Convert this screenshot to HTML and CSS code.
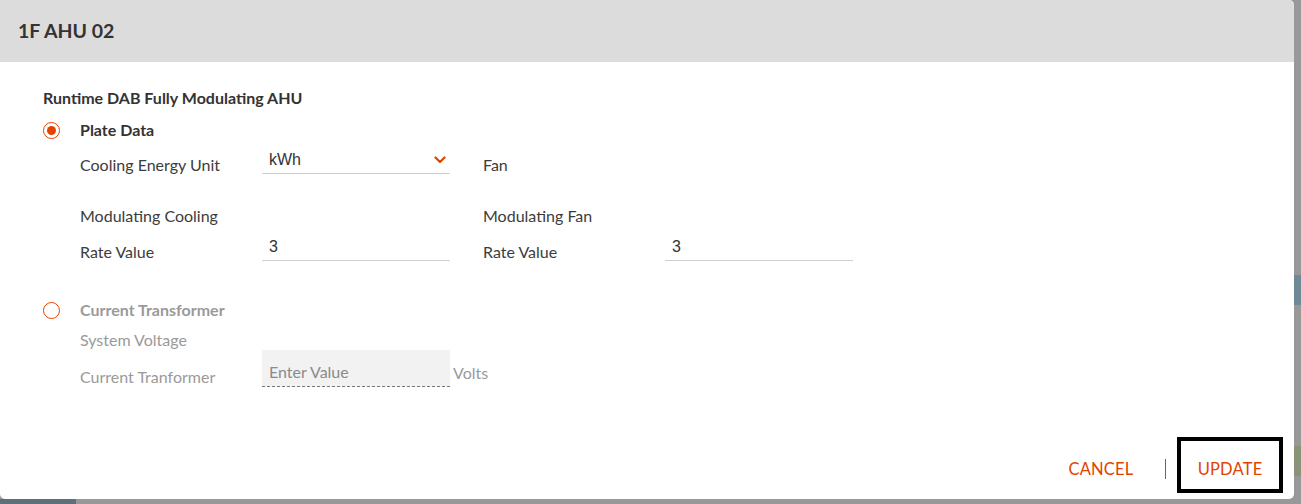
FILE: index.html
```html
<!DOCTYPE html>
<html>
<head>
<meta charset="utf-8">
<link rel="stylesheet" href="styles.css">
</head>
<body>
<div class="dialog">
  <div class="dialog-header">1F AHU 02</div>
  <div class="dialog-body">
    <div class="section-title">Runtime DAB Fully Modulating AHU</div>

    <div class="radio-row">
      <span class="radio checked"></span>
      <span class="radio-label">Plate Data</span>
    </div>

    <div class="fields">
      <div class="field-row first">
        <div class="label">Cooling Energy Unit</div>
        <div class="field select">
          <span class="value">kWh</span>
          <svg class="chevron" width="12" height="8" viewBox="0 0 12 8"><path d="M1.5 1.5 L6 6 L10.5 1.5" fill="none" stroke="#e24301" stroke-width="2.2" stroke-linecap="round" stroke-linejoin="round"/></svg>
        </div>
        <div class="label right">Fan</div>
      </div>
      <div class="field-row gap">
        <div class="label">Modulating Cooling</div>
        <div class="field empty"></div>
        <div class="label right">Modulating Fan</div>
      </div>
      <div class="field-row">
        <div class="label">Rate Value</div>
        <div class="field"><span class="value">3</span></div>
        <div class="label right">Rate Value</div>
        <div class="field"><span class="value">3</span></div>
      </div>
    </div>

    <div class="radio-row second">
      <span class="radio"></span>
      <span class="radio-label muted">Current Transformer</span>
    </div>

    <div class="ct">
      <div class="ct-row voltage">
        <div class="label muted">System Voltage</div>
      </div>
      <div class="ct-row transformer">
        <div class="label muted">Current Tranformer</div>
        <div class="disabled-input">Enter Value</div>
        <div class="unit">Volts</div>
      </div>
    </div>
  </div>
  <div class="dialog-footer">
    <button class="btn cancel">CANCEL</button>
    <span class="sep"></span>
    <button class="btn update">UPDATE</button>
  </div>
</div>
</body>
</html>
```

FILE: styles.css
```css
html, body {
  margin: 0;
  padding: 0;
}
body {
  width: 1301px;
  height: 504px;
  overflow: hidden;
  font-family: Lato, "Open Sans", sans-serif;
  background:
    linear-gradient(#5d6f7a, #5d6f7a) 0 499px / 76px 5px no-repeat,
    linear-gradient(#6f8a96, #6f8a96) 1294px 275px / 7px 30px no-repeat,
    linear-gradient(#8a9478, #8a9478) 1294px 446px / 7px 30px no-repeat,
    #989898;
}
.dialog {
  width: 1294px;
  height: 499px;
  background: #fff;
  border-radius: 0 5px 5px 5px;
  display: flex;
  flex-direction: column;
  overflow: hidden;
}
.dialog-header {
  height: 62px;
  flex: none;
  background: #dcdcdc;
  padding-left: 18px;
  line-height: 62px;
  font-size: 19.5px;
  font-weight: 700;
  color: #333;
}
.dialog-body {
  padding: 26px 0 0 43px;
  flex: 1;
}
.section-title {
  font-size: 16px;
  font-weight: 700;
  line-height: 20px;
  color: #333;
}
.radio-row {
  display: flex;
  align-items: center;
  height: 24px;
  margin-top: 10px;
}
.radio-row.second {
  margin-top: 28px;
}
.radio {
  box-sizing: border-box;
  width: 17px;
  height: 17px;
  border: 1.5px solid #e24301;
  border-radius: 50%;
  margin-right: 20px;
  display: flex;
  align-items: center;
  justify-content: center;
}
.radio.checked::after {
  content: "";
  width: 9px;
  height: 9px;
  border-radius: 50%;
  background: #e24301;
}
.radio-label {
  font-size: 16px;
  font-weight: 700;
  color: #333;
  margin-top: -1px;
}
.muted {
  color: #9a9a9a !important;
}
.fields {
  padding-left: 37px;
  margin-top: 5px;
}
.field-row {
  display: flex;
  align-items: center;
  height: 36px;
}
.field-row.gap {
  margin-top: 15px;
}
.label {
  width: 182px;
  font-size: 16px;
  color: #3c3c3c;
  line-height: 20px;
}
.label.right {
  margin-left: 33px;
}
.field {
  box-sizing: border-box;
  width: 188px;
  height: 26px;
  align-self: flex-start;
  margin-top: 1px;
  border-bottom: 1px solid #cfcfcf;
  padding-left: 7px;
  display: flex;
  align-items: center;
  justify-content: space-between;
  padding-right: 4px;
}
.field.empty {
  border-bottom: none;
}
.field .value {
  font-family: "Liberation Sans", Arial, sans-serif;
  font-size: 16px;
  color: #333;
  line-height: 18px;
  margin-top: -2px;
}
.chevron {
  margin-top: -1px;
}
.ct {
  padding-left: 37px;
  margin-top: 8px;
}
.ct-row {
  display: flex;
}
.ct-row.voltage {
  height: 20px;
  align-items: center;
}
.ct-row.transformer {
  align-items: flex-end;
  height: 37px;
}
.disabled-input {
  box-sizing: border-box;
  width: 188px;
  height: 37px;
  background: #f2f2f2;
  border-bottom: 1px dashed #777;
  padding: 13px 0 0 7px;
  font-size: 16px;
  line-height: 18px;
  color: #8a8a8a;
}
.unit {
  margin-left: 3px;
  font-size: 16px;
  color: #9a9a9a;
  line-height: 20px;
  margin-bottom: 4px;
}
.dialog-footer {
  flex: none;
  display: flex;
  justify-content: flex-end;
  align-items: center;
  padding: 0 11px 6px 0;
}
.btn {
  font-family: Lato, "Open Sans", sans-serif;
  font-size: 16.5px;
  color: #e24301;
  background: none;
  border: none;
  padding: 0;
  cursor: pointer;
  letter-spacing: 0.2px;
}
.cancel {
  margin: 7px 31px 0 0;
}
.sep {
  width: 1.5px;
  height: 20px;
  background: #666;
  margin: 7px 11px 0 0;
}
.update {
  box-sizing: border-box;
  height: 56px;
  width: 106px;
  border: 4px solid #000;
  padding-top: 7px;
  text-align: center;
}
```
